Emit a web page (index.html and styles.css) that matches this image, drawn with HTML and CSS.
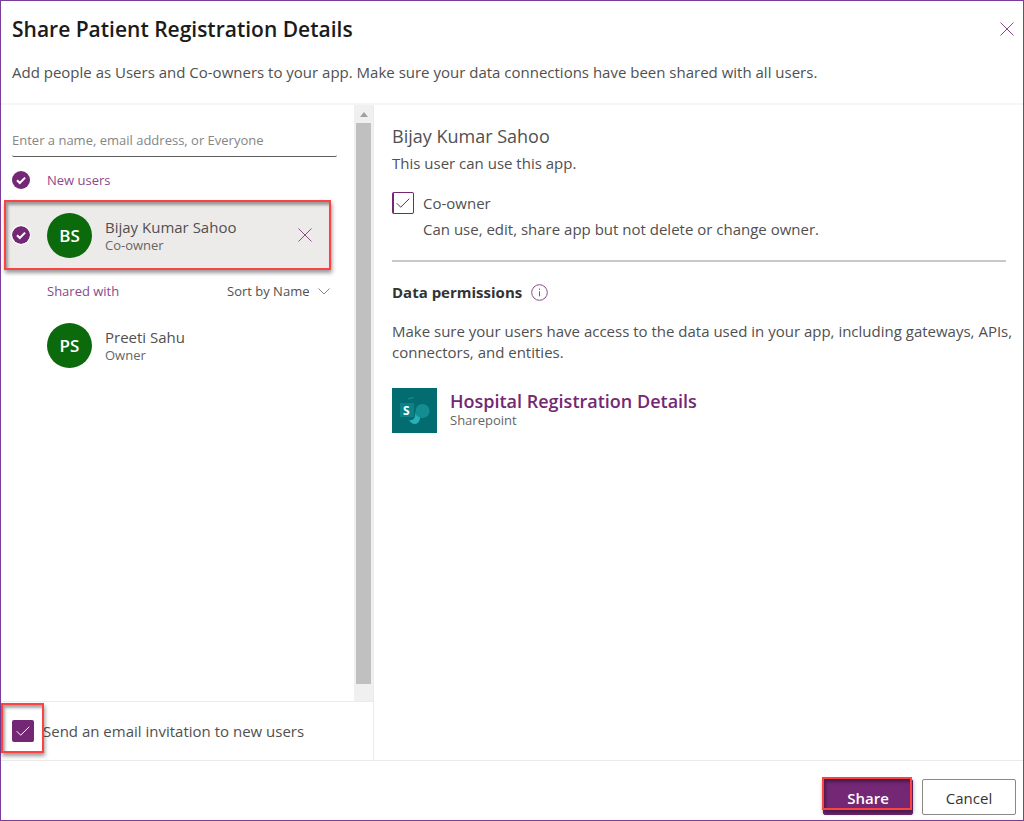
FILE: index.html
```html
<!DOCTYPE html>
<html lang="en">
<head>
<meta charset="utf-8">
<title>Share Patient Registration Details</title>
<link rel="stylesheet" href="styles.css">
</head>
<body>
<main class="dialog">
  <header class="header">
    <div class="header-text">
      <h1 class="title">Share Patient Registration Details</h1>
      <p class="intro">Add people as Users and Co-owners to your app. Make sure your data connections have been shared with all users.</p>
    </div>
    <button class="icon-button" type="button" aria-label="Close">
      <svg class="cross" viewBox="0 0 14 14"><path d="M.5.5l13 13M13.5.5l-13 13"/></svg>
    </button>
  </header>

  <div class="body">
    <section class="people">
      <div class="scroller">
        <div class="list">
          <input class="search" type="text" aria-label="People to add" placeholder="Enter a name, email address, or Everyone">
          <div class="group group-new">
            <svg class="tick" viewBox="0 0 18 18"><circle cx="9" cy="9" r="9"/><path d="M5 9.2l2.8 2.8 5.3-5.4"/></svg>
            <h2 class="group-name">New users</h2>
          </div>
          <div class="person selected">
            <svg class="tick ringed" viewBox="0 0 18 18"><circle cx="9" cy="9" r="9"/><path d="M5 9.2l2.8 2.8 5.3-5.4"/></svg>
            <span class="avatar">BS</span>
            <div class="who"><span class="name">Bijay Kumar Sahoo</span><span class="role">Co-owner</span></div>
            <button class="icon-button" type="button" aria-label="Remove Bijay Kumar Sahoo">
              <svg class="cross" viewBox="0 0 14 14"><path d="M.5.5l13 13M13.5.5l-13 13"/></svg>
            </button>
            <span class="mark mark-person"></span>
          </div>
          <div class="group group-shared">
            <h2 class="group-name">Shared with</h2>
            <label class="sort">
              <select class="sort-select" aria-label="Sort order"><option>Sort by Name</option></select>
              <svg class="chevron" viewBox="0 0 12 7"><path d="M.5.5L6 6 11.5.5"/></svg>
            </label>
          </div>
          <div class="person">
            <span class="tick"></span>
            <span class="avatar">PS</span>
            <div class="who"><span class="name">Preeti Sahu</span><span class="role">Owner</span></div>
          </div>
        </div>
        <div class="scrollbar">
          <svg class="arrow" viewBox="0 0 8 5"><path d="M4 0l4 5H0z"/></svg>
          <span class="thumb"></span>
        </div>
      </div>
      <div class="invite">
        <span class="box-wrap">
          <input class="box filled" type="checkbox" id="invite" checked>
          <svg class="box-tick light" viewBox="0 0 14 10"><path d="M.7 5.2l4 4L13.3.7"/></svg>
          <span class="mark mark-invite"></span>
        </span>
        <label class="invite-label" for="invite">Send an email invitation to new users</label>
      </div>
    </section>

    <section class="details">
      <h2 class="user">Bijay Kumar Sahoo</h2>
      <p class="text">This user can use this app.</p>
      <div class="owner">
        <span class="box-wrap">
          <input class="box" type="checkbox" id="owner" checked>
          <svg class="box-tick" viewBox="0 0 14 10"><path d="M.7 5.2l4 4L13.3.7"/></svg>
        </span>
        <div class="owner-text">
          <label class="text" for="owner">Co-owner</label>
          <p class="text">Can use, edit, share app but not delete or change owner.</p>
        </div>
      </div>
      <div class="permissions">
        <h3 class="sub">Data permissions</h3>
        <svg class="info" viewBox="0 0 17 17"><circle cx="8.500" cy="8.500" r="7.800"/><path d="M8.500 7.300v5M8.500 4.500v1.300"/></svg>
      </div>
      <p class="text">Make sure your users have access to the data used in your app, including gateways, APIs, connectors, and entities.</p>
      <div class="source">
        <svg class="tile" viewBox="0 0 45 45">
          <rect width="45" height="45" fill="#036c70"/>
          <path d="M15 12c1-2 3-3 7-3l-2 2c-2 0-3 0-5 1z" fill="#13898d"/>
          <rect x="8" y="15" width="14" height="14" fill="#0b8286"/>
          <circle cx="30.500" cy="23" r="7" fill="#128e93"/>
          <path d="M23 24c1 3 3 5 5 5 0 4-2 7-5 7s-5-2-6-4c4 1 7-2 6-8z" fill="#27b0ba"/>
          <text class="tile-letter" x="11" y="27">S</text>
        </svg>
        <div class="source-text">
          <a class="source-link" href="#">Hospital Registration Details</a>
          <span class="role">Sharepoint</span>
        </div>
      </div>
    </section>
  </div>

  <footer class="footer">
    <div class="share-wrap">
      <button class="button primary" type="button">Share</button>
      <span class="mark mark-share"></span>
    </div>
    <button class="button" type="button">Cancel</button>
  </footer>
</main>
</body>
</html>
```
FILE: styles.css
```css
* { box-sizing: border-box; }
body {
  margin: 0;
  font-family: "Open Sans", "Noto Sans", sans-serif;
  font-size: 15px;
  color: #505050;
  background: #fff;
}
h1, h2, h3, p { margin: 0; font-weight: 400; }
button, input, select { font: inherit; color: inherit; }

.dialog {
  display: flex;
  flex-direction: column;
  min-height: 100vh;
  border: 1px solid #7a3d98;
}

.header {
  display: flex;
  align-items: flex-start;
  justify-content: space-between;
  padding: 14px 8px 20px 11px;
  border-bottom: 2px solid #f5f5f5;
}
.title { font-size: 21px; line-height: 28px; font-weight: 600; color: #1b1b1b; }
.intro { margin-top: 18px; line-height: 22px; }
.icon-button {
  display: flex;
  padding: 7px 1px;
  border: 0;
  background: none;
}
.cross { width: 14px; height: 14px; fill: none; stroke: #8a4a8a; }

.body { display: flex; flex: 1; }
.people {
  display: flex;
  flex-direction: column;
  flex: 0 0 373px;
  border-right: 1px solid #ebebeb;
}
.scroller { display: flex; flex: 1; }
.list { flex: 1; padding: 18px 24px 0 4px; }
.search {
  display: block;
  width: 100%;
  height: 34px;
  margin-left: 7px;
  padding: 0;
  border: 0;
  border-bottom: 1px solid #605e5c;
  border-radius: 2px;
  background: none;
  font-size: 13px;
  outline: 0;
}
.search::placeholder { color: #858585; opacity: 1; }

.group { display: flex; align-items: center; height: 20px; }
.group-new { gap: 17px; margin: 13px 0 11px; padding-left: 7px; }
.group-shared { justify-content: space-between; margin: 12px 0 10px; padding-left: 42px; }
.group-name { font-size: 13px; color: #8a4a8a; }
.tick { width: 18px; height: 18px; flex: none; fill: #742774; }
.tick path { fill: none; stroke: #fff; stroke-width: 2; }
.ringed { border-radius: 50%; box-shadow: 0 0 0 1px #fff; }

.sort { display: flex; align-items: center; gap: 8px; }
.sort-select {
  appearance: none;
  padding: 0;
  border: 0;
  background: none;
  font-size: 13px;
}
.chevron { width: 12px; height: 7px; fill: none; stroke: #888; }

.person {
  position: relative;
  display: flex;
  align-items: center;
  height: 68px;
  padding: 0 17px 0 7px;
}
.selected { background: #edebe9; }
.avatar {
  display: flex;
  align-items: center;
  justify-content: center;
  width: 45px;
  height: 45px;
  margin: 0 13px 0 17px;
  border-radius: 50%;
  background: #0b6a0b;
  color: #fff;
  font-size: 17px;
  font-weight: 600;
}
.who { display: flex; flex: 1; flex-direction: column; }
.name { line-height: 20px; }
.role { font-size: 13px; line-height: 17px; color: #666; }

.mark {
  position: absolute;
  border: 2px solid #fb4343;
  box-shadow: 1px 3px 4px rgba(0, 0, 0, .4), inset 2px 3px 3px rgba(0, 0, 0, .35);
  pointer-events: none;
}
.mark-person { inset: -1px; }
.mark-invite { inset: -17px -10px -11px -11px; }
.mark-share { inset: -2px 1px 5px -1px; }

.scrollbar {
  display: flex;
  flex-direction: column;
  align-items: center;
  width: 19px;
  padding: 7px 0 17px;
  background: #f0f0f0;
}
.arrow { width: 8px; height: 5px; fill: #a0a0a0; }
.thumb { flex: 1; width: 15px; margin-top: 6px; background: #c0c0c0; }

.invite {
  display: flex;
  align-items: center;
  gap: 9px;
  height: 59px;
  padding-left: 11px;
  border-top: 1px solid #ebebeb;
}
.box-wrap { position: relative; display: flex; flex: none; height: 22px; }
.box {
  appearance: none;
  width: 22px;
  height: 22px;
  margin: 0;
  border: 1px solid #742774;
  border-left-width: 2px;
  border-radius: 2px;
  background: #fff;
}
.filled { background: #742774; }
.box-tick {
  position: absolute;
  inset: 6px 4px;
  width: 14px;
  height: 10px;
  fill: none;
  stroke: #444;
  pointer-events: none;
}
.light { stroke: #fff; }

.details { flex: 1; padding: 18px 8px 20px 18px; }
.user { font-size: 18px; line-height: 26px; }
.text { line-height: 21px; }
.user + .text { margin-top: 4px; }
.owner {
  display: flex;
  gap: 9px;
  padding-bottom: 20px;
  margin: 18px 9px 0 0;
  border-bottom: 2px solid #c8c8c8;
}
.owner-text { display: flex; flex-direction: column; gap: 5px; padding-top: 1px; }
.permissions { display: flex; align-items: center; gap: 9px; margin: 19px 0 18px; }
.sub { font-size: 15px; line-height: 22px; font-weight: 700; color: #333; }
.info { width: 17px; height: 17px; fill: none; stroke: #8a4a8a; }
.source { display: flex; gap: 13px; margin-top: 25px; }
.tile { width: 45px; height: 45px; flex: none; }
.tile-letter { font-size: 12px; font-weight: 700; fill: #fff; }
.source-text { display: flex; flex-direction: column; }
.source-link {
  font-size: 18px;
  line-height: 22px;
  padding-top: 2px;
  font-weight: 600;
  color: #742774;
  text-decoration: none;
}

.footer {
  display: flex;
  justify-content: flex-end;
  gap: 9px;
  padding: 18px 7px 5px;
  border-top: 1px solid #ebebeb;
}
.share-wrap { position: relative; display: flex; }
.button {
  width: 94px;
  height: 36px;
  padding: 2px 0 0;
  border: 1px solid #8a8886;
  border-radius: 2px;
  background: #fff;
  color: #333;
}
.primary {
  width: 90px;
  border-color: #742774;
  background: #742774;
  color: #fff;
  font-weight: 600;
}
```
